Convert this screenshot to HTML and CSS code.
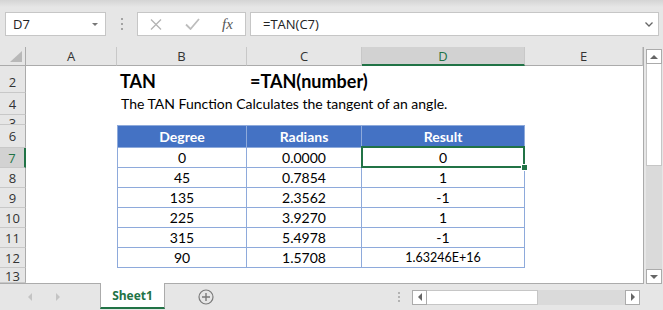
FILE: index.html
```html
<!DOCTYPE html>
<html lang="en">
<head>
    <meta charset="UTF-8">
    <title>TAN Function</title>
    <link rel="stylesheet" href="styles.css">
</head>
<body>
    <div class="toolbar">
        <div class="namebox">
            <span>D7</span>
            <span class="drop"></span>
        </div>
        <div class="grip"><i></i><i></i><i></i></div>
        <div class="fxbox">
            <svg class="cancel" width="12" height="11" viewBox="0 0 12 11"><path d="M1 0.5 L11 10.5 M11 0.5 L1 10.5" stroke="#b3b3b3" stroke-width="1.3" fill="none"/></svg>
            <svg class="enter" width="15" height="12" viewBox="0 0 15 12"><path d="M1 6.5 L5.5 11 L14 1" stroke="#bdbdbd" stroke-width="1.8" fill="none"/></svg>
            <span class="fx">fx</span>
        </div>
        <div class="formula">
            <span>=TAN(C7)</span>
            <svg width="8" height="5" viewBox="0 0 8 5"><path d="M0.5 0.5 L4 4 L7.5 0.5" stroke="#666" stroke-width="1.3" fill="none"/></svg>
        </div>
    </div>

    <div class="main">
        <div class="sheet">
            <div class="corner"><span></span></div>
            <div class="colhdr">A</div>
            <div class="colhdr">B</div>
            <div class="colhdr">C</div>
            <div class="colhdr sel">D</div>
            <div class="colhdr">E</div>

            <div class="rowhdr low">2</div>
            <div class="cell"></div>
            <div class="cell title">TAN</div>
            <div class="cell title">=TAN(number)</div>
            <div class="cell"></div>
            <div class="cell"></div>

            <div class="rowhdr low">4</div>
            <div class="cell"></div>
            <div class="cell text">The TAN Function Calculates the tangent of an angle.</div>
            <div class="cell"></div>
            <div class="cell"></div>
            <div class="cell"></div>

            <div class="rowhdr cut"><span>3</span></div>
            <div class="cell"></div>
            <div class="cell"></div>
            <div class="cell"></div>
            <div class="cell"></div>
            <div class="cell"></div>

            <div class="rowhdr">6</div>
            <div class="cell"></div>
            <div class="th first">Degree</div>
            <div class="th">Radians</div>
            <div class="th">Result</div>
            <div class="cell"></div>

            <div class="rowhdr sel">7</div>
            <div class="cell"></div>
            <div class="td first">0</div>
            <div class="td">0.0000</div>
            <div class="td active">0</div>
            <div class="cell"></div>

            <div class="rowhdr">8</div>
            <div class="cell"></div>
            <div class="td first">45</div>
            <div class="td">0.7854</div>
            <div class="td">1</div>
            <div class="cell"></div>

            <div class="rowhdr">9</div>
            <div class="cell"></div>
            <div class="td first">135</div>
            <div class="td">2.3562</div>
            <div class="td">-1</div>
            <div class="cell"></div>

            <div class="rowhdr">10</div>
            <div class="cell"></div>
            <div class="td first">225</div>
            <div class="td">3.9270</div>
            <div class="td">1</div>
            <div class="cell"></div>

            <div class="rowhdr">11</div>
            <div class="cell"></div>
            <div class="td first">315</div>
            <div class="td">5.4978</div>
            <div class="td">-1</div>
            <div class="cell"></div>

            <div class="rowhdr">12</div>
            <div class="cell"></div>
            <div class="td first">90</div>
            <div class="td">1.5708</div>
            <div class="td small">1.63246E+16</div>
            <div class="cell"></div>

            <div class="rowhdr bottom">13</div>
            <div class="cell"></div>
            <div class="cell"></div>
            <div class="cell"></div>
            <div class="cell"></div>
            <div class="cell"></div>
        </div>

        <div class="vscroll">
            <div class="sbtn"><span class="tri up"></span></div>
            <div class="vthumb"></div>
            <div class="vtrack"></div>
            <div class="sbtn"><span class="tri down"></span></div>
        </div>
    </div>

    <div class="tabbar">
        <div class="nav">
            <span class="tri left light"></span>
            <span class="tri right light"></span>
        </div>
        <div class="tab">Sheet1</div>
        <svg class="add" width="16" height="16" viewBox="0 0 16 16">
            <circle cx="8" cy="8" r="7" stroke="#7a7a7a" stroke-width="1.2" fill="none"/>
            <path d="M8 4 V12 M4 8 H12" stroke="#7a7a7a" stroke-width="1.4"/>
        </svg>
        <div class="grip tgrip"><i></i><i></i><i></i></div>
        <div class="hscroll">
            <div class="sbtn h"><span class="tri left"></span></div>
            <div class="hthumb"></div>
            <div class="htrack"></div>
            <div class="sbtn h"><span class="tri right"></span></div>
        </div>
    </div>
</body>
</html>
```

FILE: styles.css
```css
body {
    margin: 0;
    width: 663px;
    height: 310px;
    overflow: hidden;
    background-color: #e6e6e6;
    font-family: "Open Sans", "Noto Sans", sans-serif;
    color: #222;
}

/* formula bar */
.toolbar {
    height: 47px;
    box-sizing: border-box;
    padding-top: 12px;
    display: flex;
    align-items: flex-start;
    background: linear-gradient(#d4d4d4, #e6e6e6 7px);
}
.namebox {
    margin-left: 5px;
    width: 101px;
    height: 24px;
    box-sizing: border-box;
    padding: 0 7px 0 7px;
    background-color: #fff;
    border: 1px solid #c6c6c6;
    display: flex;
    align-items: center;
    justify-content: space-between;
    font-size: 13px;
}
.drop {
    width: 0;
    height: 0;
    border-left: 3px solid transparent;
    border-right: 3px solid transparent;
    border-top: 3px solid #777;
}
.grip {
    width: 31px;
    height: 24px;
    display: flex;
    flex-direction: column;
    align-items: center;
    justify-content: center;
    gap: 3px;
}
.grip i {
    width: 2px;
    height: 2px;
    background-color: #a3a3a3;
}
.fxbox {
    width: 109px;
    height: 24px;
    box-sizing: border-box;
    background-color: #fff;
    border: 1px solid #c6c6c6;
    display: flex;
    align-items: center;
    padding-left: 12px;
}
.enter {
    margin-left: 23px;
}
.fx {
    margin-left: 22px;
    font-family: "Liberation Serif", "DejaVu Serif", serif;
    font-style: italic;
    font-size: 15px;
    color: #555;
}
.formula {
    margin-left: 4px;
    width: 409px;
    height: 24px;
    box-sizing: border-box;
    padding: 0 5px 0 12px;
    background-color: #fff;
    border: 1px solid #c6c6c6;
    display: flex;
    align-items: center;
    justify-content: space-between;
    font-size: 13px;
}

/* grid */
.main {
    display: flex;
}
.sheet {
    display: grid;
    grid-template-columns: 26px 91px 130px 115px 163px 118px;
    grid-template-rows: 19px 27px 22px 10px 23px repeat(6, 20px) 15px;
    border-right: 1px solid #ababab;
    border-bottom: 1px solid #ababab;
    background-color: #fff;
    font-family: "Lato", "Liberation Sans", sans-serif;
    font-size: 14px;
    color: #000;
}
.corner {
    background-color: #e6e6e6;
    border-right: 1px solid #ababab;
    border-bottom: 1px solid #ababab;
    display: flex;
    align-items: flex-end;
    justify-content: flex-end;
    padding: 0 3px 3px 0;
}
.corner span {
    width: 0;
    height: 0;
    border-left: 12px solid transparent;
    border-bottom: 11px solid #b8b8b8;
}
.colhdr {
    background-color: #e6e6e6;
    border-right: 1px solid #c8c8c8;
    border-bottom: 1px solid #ababab;
    font-family: "Open Sans", "Noto Sans", sans-serif;
    font-size: 13px;
    color: #333;
    display: flex;
    align-items: center;
    justify-content: center;
}
.colhdr.sel {
    background-color: #d2d2d2;
    border-bottom: 2px solid #217346;
    color: #217346;
}
.rowhdr {
    background-color: #e6e6e6;
    border-right: 1px solid #ababab;
    border-bottom: 1px solid #c8c8c8;
    font-family: "Open Sans", "Noto Sans", sans-serif;
    font-size: 13px;
    color: #333;
    display: flex;
    align-items: center;
    justify-content: center;
    overflow: hidden;
}
.rowhdr.low {
    align-items: flex-end;
    padding-bottom: 1px;
}
.rowhdr.cut {
    display: block;
    text-align: center;
    line-height: 9px;
}
.rowhdr.cut span {
    display: block;
    height: 9px;
    overflow: hidden;
    line-height: 16px;
}
.rowhdr.bottom {
    align-items: flex-start;
    line-height: 16px;
}
.rowhdr.sel {
    background-color: #d2d2d2;
    border-right: 2px solid #217346;
    color: #217346;
}
.cell {
    white-space: nowrap;
    display: flex;
    align-items: flex-end;
    padding-left: 4px;
}
.title {
    font-weight: bold;
    font-size: 18px;
    padding-left: 3px;
    padding-bottom: 1px;
}
.text {
    padding-bottom: 3px;
}
.th, .td {
    display: flex;
    align-items: center;
    justify-content: center;
    border-right: 1px solid #8eaadb;
    border-bottom: 1px solid #8eaadb;
}
.th {
    background-color: #4472c4;
    border-top: 1px solid #8eaadb;
    color: #fff;
    font-weight: bold;
}
.td {
    background-color: #fff;
}
.first {
    border-left: 1px solid #8eaadb;
}
.td.small {
    font-size: 12.5px;
}
.active {
    position: relative;
}
.active::after {
    content: "";
    position: absolute;
    left: -1px;
    top: -2px;
    right: -1px;
    bottom: -1px;
    border: 2px solid #217346;
}
.active::before {
    content: "";
    position: absolute;
    right: -4px;
    bottom: -4px;
    width: 5px;
    height: 5px;
    background-color: #217346;
    border: 1px solid #fff;
    z-index: 1;
}

/* scrollbars */
.vscroll {
    width: 19px;
    padding: 2px 1px 0 2px;
    box-sizing: border-box;
    display: flex;
    flex-direction: column;
}
.sbtn {
    height: 15px;
    box-sizing: border-box;
    background-color: #fff;
    border: 1px solid #ababab;
    display: flex;
    align-items: center;
    justify-content: center;
}
.vthumb {
    height: 101px;
    background-color: #fff;
    border: 1px solid #c6c6c6;
    border-top: none;
}
.vtrack {
    flex: 1;
    background-color: #dadada;
}
.tri {
    width: 0;
    height: 0;
}
.tri.up {
    border-left: 4px solid transparent;
    border-right: 4px solid transparent;
    border-bottom: 4px solid #666;
}
.tri.down {
    border-left: 4px solid transparent;
    border-right: 4px solid transparent;
    border-top: 4px solid #666;
}
.tri.left {
    border-top: 4px solid transparent;
    border-bottom: 4px solid transparent;
    border-right: 4px solid #666;
}
.tri.right {
    border-top: 4px solid transparent;
    border-bottom: 4px solid transparent;
    border-left: 4px solid #666;
}
.tri.light {
    border-left-color: #c4c4c4;
    border-right-color: #c4c4c4;
    border-top-color: transparent;
    border-bottom-color: transparent;
}
.tri.left.light {
    border-left-color: transparent;
}
.tri.right.light {
    border-right-color: transparent;
}

/* sheet tabs */
.tabbar {
    height: 26px;
    display: flex;
    align-items: center;
}
.nav {
    width: 100px;
    display: flex;
    align-items: center;
    padding-left: 28px;
    box-sizing: border-box;
    gap: 24px;
}
.tab {
    align-self: stretch;
    width: 65px;
    box-sizing: border-box;
    margin-top: -1px;
    margin-bottom: 1px;
    background-color: #fff;
    border-left: 1px solid #ababab;
    border-right: 1px solid #ababab;
    border-bottom: 2px solid #217346;
    display: flex;
    align-items: center;
    justify-content: center;
    font-size: 12px;
    font-weight: bold;
    color: #217346;
}
.add {
    margin-left: 33px;
}
.tgrip {
    width: 5px;
    margin-left: 182px;
    gap: 2px;
}
.tgrip i {
    background-color: #b3b3b3;
}
.hscroll {
    margin-left: 11px;
    width: 228px;
    height: 15px;
    display: flex;
}
.sbtn.h {
    width: 15px;
}
.hthumb {
    width: 110px;
    background-color: #fff;
    border: 1px solid #c6c6c6;
    border-left: none;
}
.htrack {
    flex: 1;
    background-color: #dadada;
}
```
